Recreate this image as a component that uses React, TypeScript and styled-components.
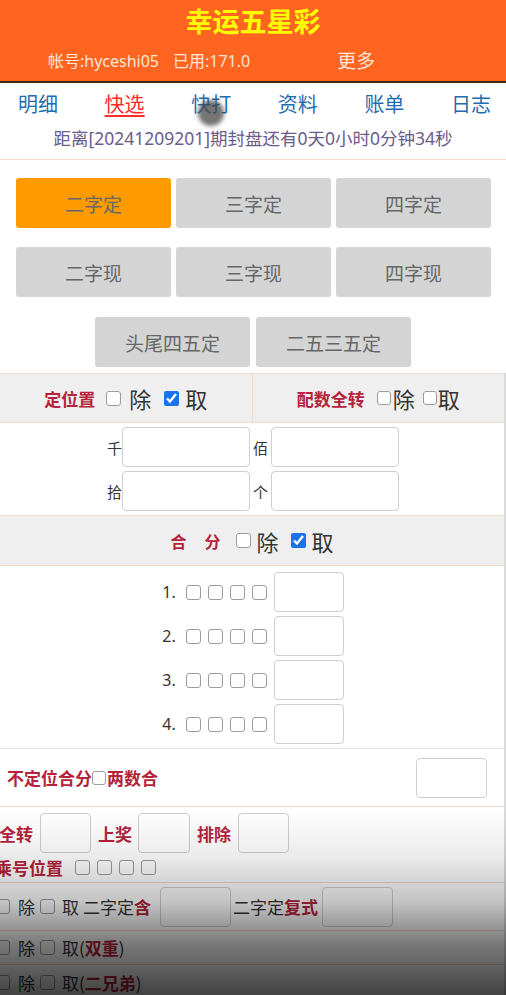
import React from 'react'
import styled, { createGlobalStyle } from 'styled-components'

const GlobalStyle = createGlobalStyle`
  body {
    margin: 0;
    background: #ffffff;
    font-family: "Noto Sans", "Noto Sans CJK SC", sans-serif;
  }
  * { box-sizing: border-box; }
`

const Page = styled.div`
  position: relative;
  width: 506px;
  height: 995px;
  overflow: hidden;
  background: #ffffff;
`

const Header = styled.header`
  height: 83px;
  background: #ff6420;
  border-bottom: 2px solid #4a2610;
`

const Title = styled.h1`
  margin: 0;
  padding-top: 3px;
  height: 38px;
  line-height: 36px;
  text-align: center;
  color: #ffff00;
  font-size: 27px;
  font-weight: bold;
  font-family: "Noto Sans CJK SC", sans-serif;
`

const InfoRow = styled.div`
  display: flex;
  align-items: center;
  height: 44px;
  padding-left: 48px;
  color: #fde6d6;
  font-size: 16px;
`

const InfoItem = styled.span<{ $gap?: number; $big?: boolean }>`
  margin-left: ${(p) => p.$gap ?? 0}px;
  font-size: ${(p) => (p.$big ? 19 : 16)}px;
`

const Nav = styled.nav`
  display: flex;
  justify-content: space-between;
  align-items: center;
  height: 40px;
  padding: 0 15px 0 18px;
`

const NavItem = styled.a<{ $active?: boolean }>`
  font-size: 20px;
  font-family: "Noto Sans CJK SC", sans-serif;
  color: ${(p) => (p.$active ? '#ff2a2a' : '#1f6db0')};
  text-decoration: ${(p) => (p.$active ? 'underline' : 'none')};
  text-underline-offset: 3px;
`

const Countdown = styled.div`
  height: 36px;
  line-height: 30px;
  text-align: center;
  color: #6b5b8c;
  font-size: 17.5px;
`

const ButtonArea = styled.section`
  border-top: 1px solid #f6dcc8;
  padding: 18px 14px 6px 16px;
`

const ButtonGrid = styled.div`
  display: grid;
  grid-template-columns: repeat(3, 155px);
  column-gap: 5px;
  row-gap: 19px;
`

const ButtonRow = styled.div`
  display: flex;
  justify-content: center;
  gap: 6px;
  margin-top: 20px;
  padding-right: 2px;
`

const PlayButton = styled.button<{ $active?: boolean }>`
  width: 155px;
  height: 50px;
  border: none;
  border-radius: 3px;
  background: ${(p) => (p.$active ? '#ff9a00' : '#d4d4d4')};
  color: #666666;
  font-size: 19px;
  font-family: "Noto Sans CJK SC", sans-serif;
  padding: 0;
`

const Form = styled.div`
  border-right: 2px solid #dadada;
`

const Bar = styled.div<{ $h: number }>`
  display: flex;
  height: ${(p) => p.$h}px;
  background: #efefef;
  border-top: 1px solid #f6dcc8;
  border-bottom: 1px solid #f6dcc8;
`

const BarHalf = styled.div<{ $divider?: boolean }>`
  flex: 1;
  display: flex;
  align-items: center;
  justify-content: center;
  border-right: ${(p) => (p.$divider ? '1px solid #f3d8c4' : 'none')};
`

const RedLabel = styled.span<{ $size?: number; $gap?: number }>`
  color: #b5233b;
  font-weight: bold;
  font-size: ${(p) => p.$size ?? 17}px;
  margin-right: ${(p) => p.$gap ?? 0}px;
  font-family: "Noto Sans CJK SC", sans-serif;
  white-space: nowrap;
`

const BigText = styled.span<{ $gap?: number }>`
  font-size: 22px;
  color: #333333;
  font-family: "Noto Sans CJK SC", sans-serif;
  margin-right: ${(p) => p.$gap ?? 0}px;
  line-height: 1;
`

const Check = styled.input.attrs({ type: 'checkbox' })<{ $size?: number; $gap?: number }>`
  width: ${(p) => p.$size ?? 15}px;
  height: ${(p) => p.$size ?? 15}px;
  margin: 0 ${(p) => p.$gap ?? 6}px 0 0;
  accent-color: #1a73e8;
  flex: none;

  &:not(:checked) {
    appearance: none;
    background: #ffffff;
    border: 1.5px solid #9c9c9c;
    border-radius: 3px;
  }
`

const FieldBlock = styled.div<{ $pad: string; $gap: number }>`
  display: flex;
  flex-direction: column;
  align-items: center;
  gap: ${(p) => p.$gap}px;
  padding: ${(p) => p.$pad};
`

const FieldRow = styled.div`
  display: flex;
  align-items: center;
  padding-left: 2px;
`

const SmallLabel = styled.span<{ $gap?: number }>`
  font-size: 15px;
  color: #333333;
  font-family: "Noto Sans CJK SC", sans-serif;
  margin-right: ${(p) => p.$gap ?? 0}px;
  margin-left: ${(p) => p.$gap ?? 0}px;
`

const TextBox = styled.input<{ $w: number; $h?: number }>`
  width: ${(p) => p.$w}px;
  height: ${(p) => p.$h ?? 40}px;
  border: 1px solid #cfcfcf;
  border-radius: 4px;
  background: #ffffff;
  flex: none;
  margin: 0;
`

const NumLabel = styled.span`
  font-size: 16px;
  color: #333333;
  margin-right: 10px;
`

const BoxSet = styled.div`
  display: flex;
  gap: 7px;
  margin-right: 7px;
`

const PlainRow = styled.div<{ $h: number; $border?: string }>`
  display: flex;
  align-items: center;
  height: ${(p) => p.$h}px;
  border-top: 1px solid ${(p) => p.$border ?? '#e6e6e6'};
`

const Spacer = styled.div`
  flex: 1;
`

const Bottom = styled.div`
  margin-left: -5px;
  border-top: 1px solid #f6dcc8;
`

const InlineRow = styled.div<{ $h: number; $pad?: number; $line?: boolean }>`
  display: flex;
  align-items: center;
  height: ${(p) => p.$h}px;
  padding-left: ${(p) => p.$pad ?? 0}px;
  border-bottom: ${(p) => (p.$line ? '1px solid #f0d6c4' : 'none')};
  font-size: 17px;
  color: #333333;
  font-family: "Noto Sans CJK SC", sans-serif;
`

const Word = styled.span<{ $gap?: number; $red?: boolean }>`
  margin-right: ${(p) => p.$gap ?? 0}px;
  color: ${(p) => (p.$red ? '#b5233b' : '#333333')};
  font-weight: ${(p) => (p.$red ? 'bold' : 'normal')};
  white-space: nowrap;
`

const Touch = styled.div`
  position: absolute;
  left: 198px;
  top: 100px;
  width: 26px;
  height: 26px;
  border-radius: 50%;
  background: rgba(70, 70, 70, 0.75);
  filter: blur(2px);
  pointer-events: none;
`

const Shade = styled.div`
  position: absolute;
  left: 0;
  right: 0;
  bottom: 0;
  height: 185px;
  pointer-events: none;
  background: linear-gradient(
    to bottom,
    rgba(0, 0, 0, 0) 0%,
    rgba(0, 0, 0, 0.08) 25%,
    rgba(0, 0, 0, 0.24) 50%,
    rgba(0, 0, 0, 0.52) 72%,
    rgba(0, 0, 0, 0.74) 100%
  );
`

const navItems = ['明细', '快选', '快打', '资料', '账单', '日志']
const firstRows = ['二字定', '三字定', '四字定', '二字现', '三字现', '四字现']

const App = () => {
  return (
    <Page>
      <GlobalStyle />
      <Header>
        <Title>幸运五星彩</Title>
        <InfoRow>
          <InfoItem>帐号:hyceshi05</InfoItem>
          <InfoItem $gap={14}>已用:171.0</InfoItem>
          <InfoItem $gap={87} $big>
            更多
          </InfoItem>
        </InfoRow>
      </Header>

      <Nav>
        {navItems.map((n) => (
          <NavItem key={n} $active={n === '快选'}>
            {n}
          </NavItem>
        ))}
      </Nav>
      <Countdown>距离[20241209201]期封盘还有0天0小时0分钟34秒</Countdown>

      <ButtonArea>
        <ButtonGrid>
          {firstRows.map((b, i) => (
            <PlayButton key={b} $active={i === 0}>
              {b}
            </PlayButton>
          ))}
        </ButtonGrid>
        <ButtonRow>
          <PlayButton>头尾四五定</PlayButton>
          <PlayButton>二五三五定</PlayButton>
        </ButtonRow>
      </ButtonArea>

      <Form>
        <Bar $h={50}>
          <BarHalf $divider>
            <RedLabel $gap={11}>定位置</RedLabel>
            <Check $gap={8} />
            <BigText $gap={13}>除</BigText>
            <Check defaultChecked $gap={6} />
            <BigText>取</BigText>
          </BarHalf>
          <BarHalf>
            <RedLabel $gap={12}>配数全转</RedLabel>
            <Check $size={14} $gap={2} />
            <BigText $gap={8}>除</BigText>
            <Check $size={14} $gap={1} />
            <BigText>取</BigText>
          </BarHalf>
        </Bar>

        <FieldBlock $pad="4px 0 4px 0" $gap={4}>
          <FieldRow>
            <SmallLabel>千</SmallLabel>
            <TextBox $w={128} />
            <SmallLabel $gap={3}>佰</SmallLabel>
            <TextBox $w={128} />
          </FieldRow>
          <FieldRow>
            <SmallLabel>拾</SmallLabel>
            <TextBox $w={128} />
            <SmallLabel $gap={3}>个</SmallLabel>
            <TextBox $w={128} />
          </FieldRow>
        </FieldBlock>

        <Bar $h={51}>
          <BarHalf>
            <RedLabel $size={16} $gap={18}>合</RedLabel>
            <RedLabel $size={16} $gap={15}>分</RedLabel>
            <Check $gap={6} />
            <BigText $gap={12}>除</BigText>
            <Check defaultChecked $gap={6} />
            <BigText>取</BigText>
          </BarHalf>
        </Bar>

        <FieldBlock $pad="6px 0 4px 0" $gap={4}>
          {[1, 2, 3, 4].map((n) => (
            <FieldRow key={n}>
              <NumLabel>{n}.</NumLabel>
              <BoxSet>
                <Check $size={15} $gap={0} />
                <Check $size={15} $gap={0} />
                <Check $size={15} $gap={0} />
                <Check $size={15} $gap={0} />
              </BoxSet>
              <TextBox $w={70} />
            </FieldRow>
          ))}
        </FieldBlock>

        <PlainRow $h={58}>
          <RedLabel style={{ marginLeft: 7 }}>不定位合分</RedLabel>
          <Check $size={14} $gap={1} />
          <RedLabel>两数合</RedLabel>
          <Spacer />
          <TextBox $w={71} style={{ marginRight: 17 }} />
        </PlainRow>

        <Bottom>
          <InlineRow $h={46} $pad={4} style={{ alignItems: 'flex-end' }}>
            <Word $red $gap={7} style={{ alignSelf: 'center', marginTop: 7 }}>
              全转
            </Word>
            <TextBox $w={51} style={{ marginRight: 7 }} />
            <Word $red $gap={6} style={{ alignSelf: 'center', marginTop: 7 }}>
              上奖
            </Word>
            <TextBox $w={52} style={{ marginRight: 7 }} />
            <Word $red $gap={7} style={{ alignSelf: 'center', marginTop: 7 }}>
              排除
            </Word>
            <TextBox $w={51} />
          </InlineRow>
          <InlineRow $h={30} $line>
            <Word $red $gap={12}>
              乘号位置
            </Word>
            <BoxSet>
              <Check $size={15} $gap={0} />
              <Check $size={15} $gap={0} />
              <Check $size={15} $gap={0} />
              <Check $size={15} $gap={0} />
            </BoxSet>
          </InlineRow>
          <InlineRow $h={48} $line>
            <Check $size={15} $gap={8} />
            <Word $gap={5}>除</Word>
            <Check $size={15} $gap={7} />
            <Word $gap={4}>取</Word>
            <Word>二字定</Word>
            <Word $red $gap={9}>
              含
            </Word>
            <TextBox $w={71} style={{ marginRight: 2 }} />
            <Word>二字定</Word>
            <Word $red $gap={4}>
              复式
            </Word>
            <TextBox $w={71} />
          </InlineRow>
          <InlineRow $h={34} $line>
            <Check $size={15} $gap={8} />
            <Word $gap={5}>除</Word>
            <Check $size={15} $gap={7} />
            <Word>取(</Word>
            <Word $red>双重</Word>
            <Word>)</Word>
          </InlineRow>
          <InlineRow $h={34}>
            <Check $size={15} $gap={8} />
            <Word $gap={5}>除</Word>
            <Check $size={15} $gap={7} />
            <Word>取(</Word>
            <Word $red>二兄弟</Word>
            <Word>)</Word>
          </InlineRow>
        </Bottom>
      </Form>

      <Touch />
      <Shade />
    </Page>
  )
}

export default App
